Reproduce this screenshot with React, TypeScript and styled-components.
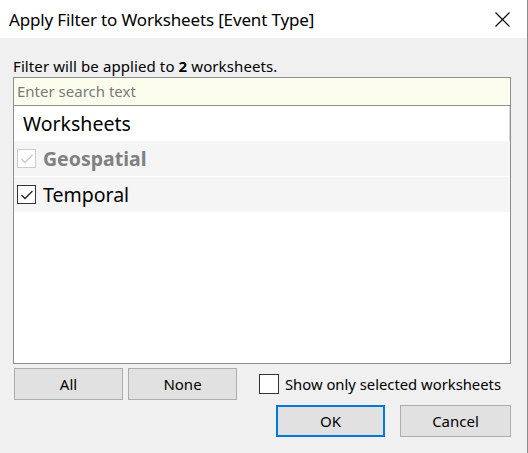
import React from "react";
import styled, { createGlobalStyle } from "styled-components";

const Global = createGlobalStyle`
  html, body { margin: 0; padding: 0; background: #f0f0f0; }
  body { font-family: "Noto Sans", "Open Sans", sans-serif; color: #000; }
  * { box-sizing: border-box; }
`;

const Window = styled.div`
  width: 528px;
  height: 453px;
  display: flex;
  flex-direction: column;
  background: #f0f0f0;
  border-right: 1px solid #8a8a8a;
`;

const TitleBar = styled.div`
  height: 38px;
  background: #fff;
  display: flex;
  align-items: center;
  justify-content: space-between;
  padding: 0 17px 0 9px;
`;

const Title = styled.div`
  font-size: 17px;
  letter-spacing: -0.15px;
`;

const Body = styled.div`
  flex: 1;
  display: flex;
  flex-direction: column;
  padding: 17px 16px 0 13px;
`;

const Info = styled.div`
  font-size: 15px;
  letter-spacing: 0.1px;
  line-height: 22px;
  height: 22px;
  b { font-weight: 700; }
`;

const Search = styled.div`
  height: 28px;
  border: 1px solid #8e8f8f;
  border-bottom: none;
  background: #fdfdee;
  color: #7a7a7a;
  font-size: 15px;
  line-height: 26px;
  padding-left: 3px;
`;

const List = styled.div`
  height: 259px;
  border: 1px solid #8e8f8f;
  background: #fff;
  display: flex;
  flex-direction: column;
`;

const Header = styled.div`
  height: 35px;
  padding-left: 9px;
  font-size: 19.5px;
  line-height: 35px;
  border-right: 1px solid #d8d8d8;
`;

const Row = styled.div<{ $disabled?: boolean }>`
  height: 35px;
  background: #f5f5f5;
  display: flex;
  align-items: center;
  gap: 7px;
  padding-left: 3px;
  margin-bottom: 1px;
  font-size: 19.5px;
  font-weight: ${(p) => (p.$disabled ? 700 : 400)};
  color: ${(p) => (p.$disabled ? "#808080" : "#000")};
`;

const Box = styled.span<{ $disabled?: boolean; $size?: number }>`
  width: ${(p) => p.$size ?? 19}px;
  height: ${(p) => p.$size ?? 19}px;
  border: 1px solid ${(p) => (p.$disabled ? "#cccccc" : "#333333")};
  background: #fff;
  display: inline-flex;
  align-items: center;
  justify-content: center;
  flex: none;
`;

const ButtonRow = styled.div`
  display: flex;
  align-items: center;
  margin-top: 4px;
  padding-left: 1px;
`;

const Button = styled.button<{ $default?: boolean; $w: number }>`
  width: ${(p) => p.$w}px;
  height: 32px;
  background: #e1e1e1;
  border: ${(p) => (p.$default ? "2px solid #0078d7" : "1px solid #adadad")};
  font-family: inherit;
  font-size: 15px;
  color: #000;
  padding: 0;
  margin: 0;
`;

const CheckLabel = styled.label`
  display: flex;
  align-items: center;
  gap: 6px;
  margin-left: 22px;
  font-size: 14.8px;
`;

const Footer = styled.div`
  display: flex;
  justify-content: flex-end;
  gap: 15px;
  margin-top: 5px;
`;

const Check = ({ color }: { color: string }) => (
  <svg width="14" height="12" viewBox="0 0 14 12">
    <polyline points="1.5,6 5,9.5 12.5,2" fill="none" stroke={color} strokeWidth="1.3" />
  </svg>
);

export default function App() {
  return (
    <>
      <Global />
      <Window>
        <TitleBar>
          <Title>Apply Filter to Worksheets [Event Type]</Title>
          <svg width="15" height="15" viewBox="0 0 15 15">
            <path d="M0.5 0.5 L14.5 14.5 M14.5 0.5 L0.5 14.5" stroke="#000" strokeWidth="1.1" />
          </svg>
        </TitleBar>
        <Body>
          <Info>
            Filter will be applied to <b>2</b> worksheets.
          </Info>
          <Search>Enter search text</Search>
          <List>
            <Header>Worksheets</Header>
            <Row $disabled>
              <Box $disabled>
                <Check color="#c8c8c8" />
              </Box>
              Geospatial
            </Row>
            <Row>
              <Box>
                <Check color="#222" />
              </Box>
              Temporal
            </Row>
          </List>
          <ButtonRow>
            <Button $w={109}>All</Button>
            <Button $w={109} style={{ marginLeft: 5 }}>None</Button>
            <CheckLabel>
              <Box $size={20} />
              Show only selected worksheets
            </CheckLabel>
          </ButtonRow>
          <Footer>
            <Button $w={109} $default>OK</Button>
            <Button $w={111}>Cancel</Button>
          </Footer>
        </Body>
      </Window>
    </>
  );
}
